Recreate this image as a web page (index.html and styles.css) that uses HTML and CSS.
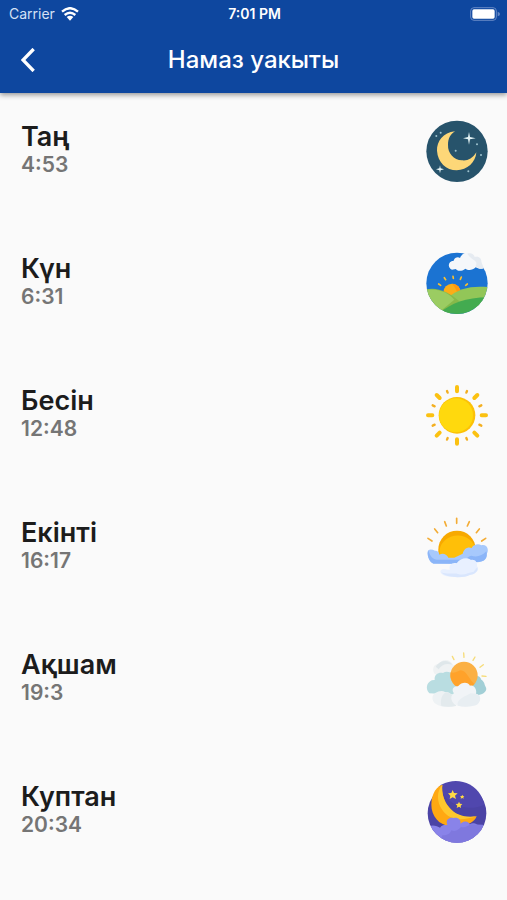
FILE: index.html
```html
<!DOCTYPE html>
<html lang="kk">
<head>
<meta charset="utf-8">
<meta name="viewport" content="width=device-width, initial-scale=1">
<title>Намаз уакыты</title>
<link rel="stylesheet" href="styles.css">
</head>
<body>
<header class="top">
  <div class="status">
    <div class="carrier">
      <span>Carrier</span>
      <svg class="wifi" viewBox="0 0 54 42" aria-hidden="true">
        <path d="M3 14Q27-7 51 14" fill="none" stroke="#fff" stroke-width="7"/>
        <path d="M11 24Q27 10 43 24" fill="none" stroke="#fff" stroke-width="7"/>
        <path d="M17 30Q27 22 37 30L27 41Z" fill="#fff"/>
      </svg>
    </div>
    <span class="clock">7:01 PM</span>
    <svg class="battery" viewBox="0 0 90 42" aria-hidden="true">
      <rect x="2" y="2" width="77" height="38" rx="10" fill="none" stroke="#6487c4" stroke-width="3"/>
      <rect x="7" y="7" width="67" height="28" rx="5" fill="#fff"/>
      <path d="M83 14Q90 16 90 21T83 28Z" fill="#6487c4"/>
    </svg>
  </div>
  <div class="bar">
    <button class="back" type="button" aria-label="Back">
      <svg viewBox="0 0 42 72" aria-hidden="true"><path d="M38 3L6 36L38 69" fill="none" stroke="#fff" stroke-width="10"/></svg>
    </button>
    <h1>Намаз уакыты</h1>
  </div>
</header>
<main>
  <ul class="times">
    <li>
      <div><h2>Таң</h2><p>4:53</p></div>
      <svg class="icon" viewBox="27 27 186 186" aria-hidden="true">
        <circle cx="120" cy="118" r="92" fill="#27536b"/>
        <path d="M114 58C78 62 59 89 60 116C62 151 88 175 119 175C151 174 176 151 178 121C166 140 152 147 135 145C110 143 92 124 93 98C93 80 100 67 114 58Z" fill="#fdd778"/>
        <path d="M156 60L159 75L176 79L159 82L156 98L153 82L138 79L153 75ZM69 160L71 169L81 172L71 175L69 184L67 175L57 172L67 169Z" fill="#e4f3f5"/>
        <g fill="#9fc3cf"><circle cx="71" cy="62" r="3"/><circle cx="58" cy="72" r="3"/><circle cx="116" cy="116" r="3"/><circle cx="180" cy="97" r="3"/><circle cx="192" cy="129" r="3"/><circle cx="154" cy="178" r="3"/></g>
      </svg>
    </li>
    <li>
      <div><h2>Күн</h2><p>6:31</p></div>
      <svg class="icon" viewBox="27 27 186 186" aria-hidden="true">
        <clipPath id="day"><circle cx="120" cy="118" r="92"/></clipPath>
        <g clip-path="url(#day)">
          <path d="M20 20H220V220H20Z" fill="#1b73d2"/>
          <g stroke="#fbc02d" stroke-width="5" stroke-linecap="round"><path d="M65 120L71 124M82 101L86 107M108 97L109 103M133 99L130 106M151 120L146 124"/></g>
          <circle cx="105" cy="145" r="26" fill="#fbad18"/>
          <path d="M105 119A26 26 0 0 1 125 161C121 143 116 130 105 119Z" fill="#ff980d"/>
          <path d="M92 162C126 131 168 124 220 130V190H90Z" fill="#92c658"/>
          <path d="M20 138C58 126 94 143 126 171L91 220H20Z" fill="#86b94a"/>
          <path d="M20 139C60 131 93 145 112 167L70 202Z" fill="#9bcc62"/>
          <path d="M70 206C101 178 150 159 220 160V220H70Z" fill="#43ab50"/>
        </g>
        <path d="M105 77C91 72 92 51 110 50C113 40 123 38 129 42C135 24 163 20 172 39C188 35 194 46 193 53L200 72C194 77 182 74 176 70C167 79 153 80 145 74C133 84 119 81 117 75Z" fill="#f5f7fa"/>
        <path d="M151 29C163 25 171 31 173 39C188 35 194 46 193 53L200 72C190 78 180 71 176 66C185 48 165 51 151 29Z" fill="#e6ebf1"/>
      </svg>
    </li>
    <li>
      <div><h2>Бесін</h2><p>12:48</p></div>
      <svg class="icon" viewBox="27 27 186 186" aria-hidden="true">
        <g stroke="#fbc111" stroke-width="12" stroke-linecap="round"><path d="M120 33V46M120 190V203M33 118H46M194 118H207M59 57L68 66M172 170L181 179M181 57L172 66M68 170L59 179"/></g>
        <g stroke="#f3af21" stroke-width="7" stroke-linecap="round"><path d="M90 45L92 50M150 45L148 50M47 88L53 91M193 88L187 91M47 149L53 146M193 149L187 146M90 191L92 186M150 191L148 186"/></g>
        <circle cx="120" cy="118" r="55" fill="#fcc107"/>
        <circle cx="117" cy="118" r="51" fill="#ffd90d"/>
      </svg>
    </li>
    <li>
      <div><h2>Екінті</h2><p>16:17</p></div>
      <svg class="icon" viewBox="27 27 186 186" aria-hidden="true">
        <path d="M119 31V46M83 41L88 54M157 41L151 54M53 63L62 74M187 63L178 74M33 91L45 99M206 91L194 99" stroke="#f3ac35" stroke-width="5" stroke-linecap="round"/>
        <path d="M64 150V124A55 55 0 0 1 176 124V150Z" fill="#f7a900"/>
        <path d="M68 150V124A55 52 0 0 1 176 125V150Z" fill="#ffbf08"/>
        <path d="M49 166C36 163 28 137 34 127C39 123 47 125 54 128C64 128 67 135 67 140C77 133 91 139 94 149H112L137 137C141 120 154 115 164 120C170 109 184 106 193 112C211 107 218 128 208 139C210 157 194 165 174 162L136 164L111 167Z" fill="#a7c9fc"/>
        <path d="M34 127C39 146 50 157 64 155H138C150 154 153 144 163 143C179 149 196 143 208 130C215 153 200 164 174 162L136 164L111 167H49C36 163 28 137 34 127Z" fill="#8bb5f8"/>
        <path d="M88 205C69 200 65 187 77 184C87 183 94 187 99 185C94 172 105 162 119 166C130 150 151 147 162 156C174 153 182 163 180 174C190 187 172 201 158 201C142 211 113 207 88 205Z" fill="#e8f0ff"/>
        <path d="M73 193C95 201 111 193 123 198C143 204 158 191 169 192L181 178C186 193 168 200 158 201C140 211 87 211 73 193Z" fill="#d9e6fd"/>
      </svg>
    </li>
    <li>
      <div><h2>Ақшам</h2><p>19:3</p></div>
      <svg class="icon" viewBox="27 27 186 186" aria-hidden="true">
        <path d="M106 49L111 59M140 39L141 52M174 51L168 61M199 74L189 82M207 109L195 108" stroke="#f6dc79" stroke-width="4" stroke-linecap="round"/>
        <path d="M54 103C42 88 52 69 64 73C77 54 99 57 108 74C120 78 125 98 109 108Z" fill="#eff2f3"/>
        <path d="M56 80C67 61 94 57 106 74C89 68 72 74 65 88Z" fill="#dfe7ea"/>
        <path d="M37 160C22 145 31 119 53 120C51 102 66 96 78 99C95 88 117 105 121 126L119 164Z" fill="#b9dde1"/>
        <path d="M171 112C181 103 190 110 193 119C203 126 202 132 205 139C216 154 193 168 178 165L155 137Z" fill="#a2cfd6"/>
        <circle cx="141" cy="106" r="41" fill="#fbb044"/>
        <path d="M101 97C116 101 124 92 131 91C149 93 154 115 172 132A41 41 0 0 1 101 97Z" fill="#ffa22a"/>
        <path d="M57 192C44 185 43 165 55 159C65 152 77 151 84 156C98 153 111 169 117 185V197C98 204 70 202 57 192Z" fill="#eef2f4"/>
        <path d="M73 198C69 181 74 163 87 157C98 156 112 170 117 185V198Q94 203 73 198Z" fill="#e3eaed"/>
        <path d="M115 195C98 182 101 165 111 160C100 146 114 136 123 139C135 124 154 126 159 137C175 134 180 153 177 161C195 164 193 188 176 196Q146 205 115 195Z" fill="#f1f4f7"/>
        <path d="M122 197C118 176 147 169 161 160L177 161C195 164 193 188 176 196Q148 204 122 197Z" fill="#e8eef2"/>
      </svg>
    </li>
    <li>
      <div><h2>Куптан</h2><p>20:34</p></div>
      <svg class="icon" viewBox="27 27 186 186" aria-hidden="true">
        <clipPath id="night"><circle cx="120" cy="124" r="88"/></clipPath>
        <circle cx="120" cy="124" r="88" fill="#4b43a5"/>
        <path d="M65 44A87 87 0 0 1 202 98C159 119 92 106 65 44Z" fill="#5047ae"/>
        <path d="M76 38C51 46 40 79 44 110C51 149 84 168 124 162C154 161 173 149 179 133C145 139 117 132 98 108C81 89 73 62 76 38Z" fill="#ffa812"/>
        <path d="M76 38C58 58 59 90 76 114C96 144 132 148 179 133C143 137 118 130 98 108C81 89 73 62 76 38Z" fill="#ffc72d"/>
        <path d="M107 54L111 63L122 64L114 71L117 81L107 76L98 81L100 71L93 64L103 63ZM126 89L129 95L136 96L131 101L132 108L126 104L119 108L121 101L116 96L123 95ZM136 68L138 72L142 73L139 76L140 80L136 78L131 80L132 76L129 73L134 72Z" fill="#ffda45"/>
        <g clip-path="url(#night)">
          <path d="M30 169C43 154 60 163 69 167C76 158 85 159 91 160C84 142 98 135 110 138C124 134 133 145 130 155C145 142 157 151 158 157C172 149 180 158 190 164V220H35Z" fill="#8983e9"/>
          <path d="M76 190C94 191 100 183 103 175C117 181 126 171 132 165C143 168 154 163 158 157L198 158V220H65Z" fill="#7f78de"/>
        </g>
      </svg>
    </li>
  </ul>
</main>
</body>
</html>
```
FILE: styles.css
```css
* {
  box-sizing: border-box;
}

body {
  margin: 0;
  background: #fafafa;
  color: #1c1c1c;
  font-family: Inter, "Liberation Sans", sans-serif;
}

h1, h2, p, ul {
  margin: 0;
  padding: 0;
}

.top {
  background: #0e479f;
  color: #fff;
  box-shadow: 0 2px 5px rgba(0, 0, 0, 0.4);
}

.status {
  display: grid;
  grid-template-columns: 1fr auto 1fr;
  align-items: center;
  height: 27px;
  padding: 0 7px 0 9px;
  font-size: 14px;
  line-height: 20px;
}

.carrier {
  display: flex;
  align-items: center;
  gap: 6px;
  color: #d5e1f5;
}

.wifi {
  width: 18px;
  height: 14px;
}

.clock {
  font-weight: 600;
}

.battery {
  justify-self: end;
  width: 30px;
  height: 14px;
}

.bar {
  display: grid;
  grid-template-columns: 56px 1fr 56px;
  align-items: center;
  height: 66px;
}

.back {
  display: flex;
  align-items: center;
  justify-content: center;
  height: 48px;
  padding: 0;
  border: 0;
  background: none;
}

.back svg {
  width: 14px;
  height: 24px;
}

h1 {
  font-size: 24px;
  font-weight: 500;
  line-height: 32px;
  text-align: center;
}

.times {
  padding-top: 28px;
  list-style: none;
}

.times li {
  display: flex;
  justify-content: space-between;
  align-items: flex-start;
  min-height: 132px;
  padding: 0 19px 0 21px;
}

h2 {
  font-size: 27px;
  font-weight: 600;
  line-height: 32px;
}

.times p {
  color: #757575;
  font-size: 21px;
  font-weight: 600;
  line-height: 24px;
}

.icon {
  flex: none;
  width: 62px;
  height: 62px;
  overflow: visible;
}
```
